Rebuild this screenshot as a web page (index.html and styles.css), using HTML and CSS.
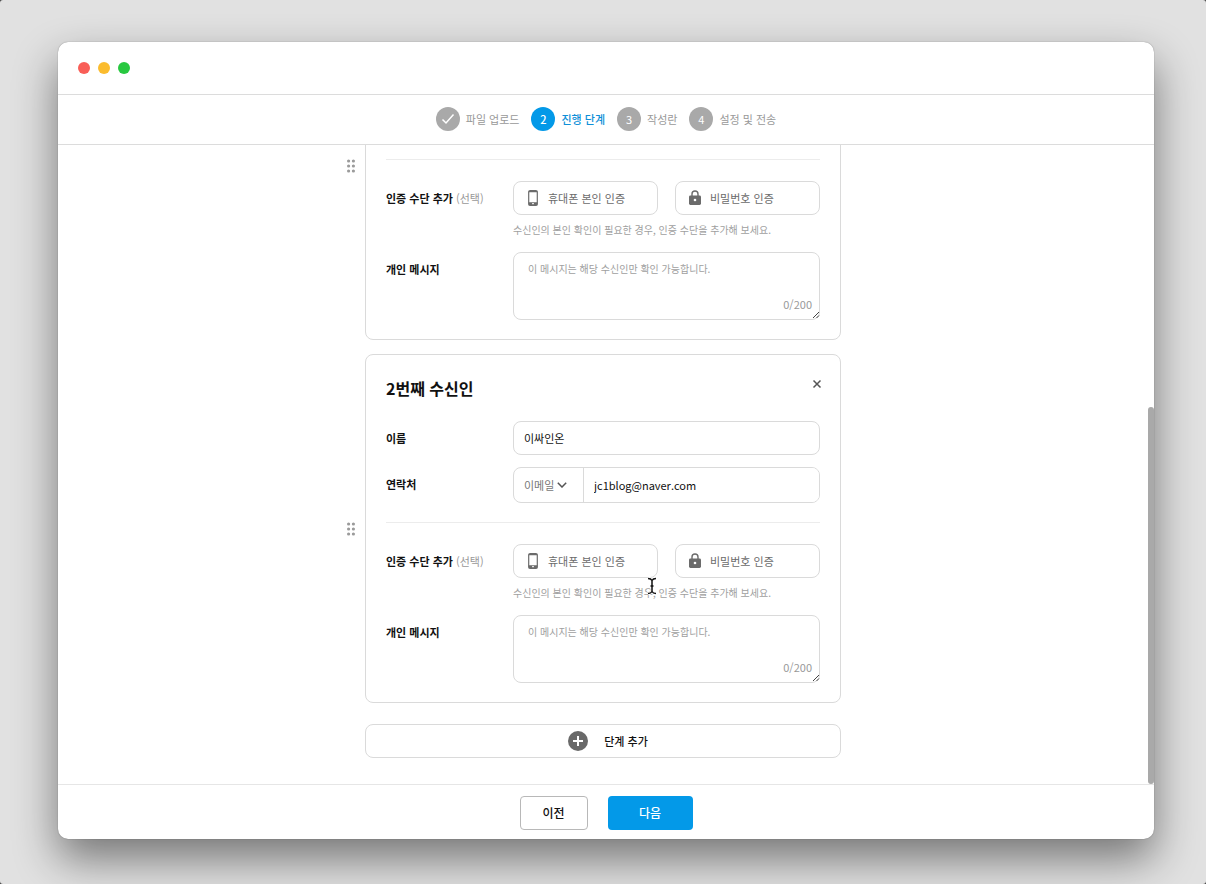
FILE: index.html
```html
<!DOCTYPE html>
<html lang="ko">
<head>
  <meta charset="UTF-8">
  <meta name="viewport" content="width=device-width, initial-scale=1">
  <title>진행 단계</title>
  <link rel="stylesheet" href="styles.css">
</head>
<body>
  <svg class="sprite" aria-hidden="true">
    <symbol id="icon-phone" viewBox="0 0 12 16">
      <rect x="1.7" y="0.7" width="8.6" height="14.6" rx="1.4" fill="none" stroke="#6b6b6b" stroke-width="1.2"/>
      <path d="M1.7 1h8.600v1.200h-8.600zM1.700 12.200h8.600v3h-8.600z" fill="#6b6b6b"/>
      <path d="M5 13.700h2" stroke="#fff" stroke-width="1"/>
    </symbol>
    <symbol id="icon-lock" viewBox="0 0 12 16">
      <path d="M3 6.500V4a3 3 0 0 1 6 0v2.500" fill="none" stroke="#6b6b6b" stroke-width="1.400"/>
      <rect x="0" y="5.500" width="12" height="9.500" rx="1.400" fill="#6b6b6b"/>
      <circle cx="6" cy="10" r="1.300" fill="#fff"/>
    </symbol>
    <symbol id="icon-grip" viewBox="0 0 8 14">
      <g fill="#9b9b9b">
        <circle cx="1.600" cy="2" r="1.600"/><circle cx="6.400" cy="2" r="1.600"/>
        <circle cx="1.600" cy="7" r="1.600"/><circle cx="6.400" cy="7" r="1.600"/>
        <circle cx="1.600" cy="12" r="1.600"/><circle cx="6.400" cy="12" r="1.600"/>
      </g>
    </symbol>
    <symbol id="icon-resize" viewBox="0 0 8 8">
      <path d="M1 7L7 1M4.500 7L7 4.500" stroke="#444" stroke-width="1"/>
    </symbol>
  </svg>

  <div class="window">
    <header class="titlebar">
      <span class="dot red"></span>
      <span class="dot yellow"></span>
      <span class="dot green"></span>
    </header>

    <ol class="steps">
      <li class="step">
        <span class="step-num"><svg width="14" height="12" viewBox="0 0 14 12"><path d="M1.500 6.500L5 10L12.500 1.500" fill="none" stroke="#fff" stroke-width="1.500"/></svg></span>
        파일 업로드
      </li>
      <li class="step active"><span class="step-num">2</span>진행 단계</li>
      <li class="step"><span class="step-num">3</span>작성란</li>
      <li class="step"><span class="step-num">4</span>설정 및 전송</li>
    </ol>

    <div class="body">
      <main class="content">
        <div class="row">
          <svg class="grip" width="8" height="14"><use href="#icon-grip"/></svg>
          <section class="card">
            <hr>
            <div class="field">
              <span class="label">인증 수단 추가 <small>(선택)</small></span>
              <div>
                <div class="auth">
                  <button class="auth-btn"><svg width="12" height="16"><use href="#icon-phone"/></svg>휴대폰 본인 인증</button>
                  <button class="auth-btn"><svg width="12" height="16"><use href="#icon-lock"/></svg>비밀번호 인증</button>
                </div>
                <p class="help">수신인의 본인 확인이 필요한 경우, 인증 수단을 추가해 보세요.</p>
              </div>
            </div>
            <div class="field">
              <label class="label" for="msg1">개인 메시지</label>
              <div class="message">
                <textarea id="msg1" placeholder="이 메시지는 해당 수신인만 확인 가능합니다."></textarea>
                <span class="count">0/200</span>
                <svg class="resize" width="8" height="8"><use href="#icon-resize"/></svg>
              </div>
            </div>
          </section>
        </div>

        <div class="row">
          <svg class="grip" width="8" height="14"><use href="#icon-grip"/></svg>
          <section class="card">
            <div class="card-head">
              <h2>2번째 수신인</h2>
              <button class="close" aria-label="삭제"><svg width="10" height="10" viewBox="0 0 10 10"><path d="M1.500 1.500l7 7M8.500 1.500l-7 7" stroke="#555" stroke-width="1.500"/></svg></button>
            </div>
            <div class="field name">
              <label class="label" for="name">이름</label>
              <input class="input" id="name" type="text" value="이싸인온">
            </div>
            <div class="field">
              <label class="label" for="contact">연락처</label>
              <div class="contact">
                <div class="kind">
                  <select aria-label="연락처 종류"><option>이메일</option></select>
                  <svg width="10" height="6" viewBox="0 0 10 6"><path d="M0.800 0.800L5 5L9.200 0.800" fill="none" stroke="#555" stroke-width="1.500"/></svg>
                </div>
                <input id="contact" type="text" value="jc1blog@naver.com">
              </div>
            </div>
            <hr>
            <div class="field">
              <span class="label">인증 수단 추가 <small>(선택)</small></span>
              <div>
                <div class="auth">
                  <button class="auth-btn"><svg width="12" height="16"><use href="#icon-phone"/></svg>휴대폰 본인 인증</button>
                  <button class="auth-btn"><svg width="12" height="16"><use href="#icon-lock"/></svg>비밀번호 인증</button>
                </div>
                <p class="help">수신인의 본인 확인이 필요한 경우, 인증 수단을 추가해 보세요.</p>
              </div>
            </div>
            <div class="field">
              <label class="label" for="msg2">개인 메시지</label>
              <div class="message">
                <textarea id="msg2" placeholder="이 메시지는 해당 수신인만 확인 가능합니다."></textarea>
                <span class="count">0/200</span>
                <svg class="resize" width="8" height="8"><use href="#icon-resize"/></svg>
              </div>
            </div>
          </section>
        </div>

        <div class="row add-row">
          <button class="add">
            <svg width="20" height="20" viewBox="0 0 20 20"><circle cx="10" cy="10" r="10" fill="#696969"/><path d="M10 5v10M5 10h10" stroke="#fff" stroke-width="2"/></svg>
            단계 추가
          </button>
        </div>
      </main>
      <div class="scrollbar"><div class="thumb"></div></div>
    </div>

    <footer class="footer">
      <button class="btn prev">이전</button>
      <button class="btn next">다음</button>
    </footer>
  </div>

  <svg class="cursor" width="10" height="18" viewBox="0 0 10 18"><path d="M1 1.500Q4 1.500 5 3.500Q6 1.500 9 1.500M5 3v12M1 16.500Q4 16.500 5 14.500Q6 16.500 9 16.500M3.500 9h3" fill="none" stroke="#fff" stroke-width="3"/><path d="M1 1.500Q4 1.500 5 3.500Q6 1.500 9 1.500M5 3v12M1 16.500Q4 16.500 5 14.500Q6 16.500 9 16.500M3.500 9h3" fill="none" stroke="#111" stroke-width="1.500"/></svg>
</body>
</html>
```
FILE: styles.css
```css
* { box-sizing: border-box; }
html { background: #444; }
body {
  margin: 0;
  height: 100vh;
  padding: 42px 52px 45px 58px;
  background: #e1e1e1;
  border-radius: 3px;
  overflow: hidden;
  color: #111;
  font-family: "Noto Sans CJK KR", sans-serif;
  font-size: 11px;
  line-height: 16px;
}
button, input, select, textarea { font: inherit; color: inherit; margin: 0; }
button { background: #fff; cursor: pointer; padding: 0; }
svg { flex: none; }
.sprite { position: absolute; width: 0; height: 0; }

.window {
  display: flex;
  flex-direction: column;
  height: 100%;
  background: #fff;
  border-radius: 10px;
  overflow: hidden;
  box-shadow: 0 0 1px rgba(0, 0, 0, 0.5), 0 20px 44px rgba(0, 0, 0, 0.48);
}
.titlebar {
  display: flex;
  align-items: center;
  gap: 8px;
  height: 53px;
  padding-left: 20px;
  border-bottom: 1px solid #dcdcdc;
}
.dot { width: 12px; height: 12px; border-radius: 50%; }
.red { background: #f95e57; }
.yellow { background: #fbbc2e; }
.green { background: #28c840; }

.steps {
  display: flex;
  align-items: center;
  justify-content: center;
  gap: 12px;
  height: 50px;
  margin: 0;
  padding: 0 0 1px;
  list-style: none;
  border-bottom: 1px solid #dcdcdc;
  color: #999;
}
.step { display: flex; align-items: center; gap: 6px; }
.step-num {
  display: flex;
  align-items: center;
  justify-content: center;
  width: 24px;
  height: 24px;
  border-radius: 50%;
  background: #a9a9a9;
  color: #fff;
}
.active { color: #0e8fd8; font-weight: 500; }
.active .step-num { background: #0399e8; }

.body { flex: 1; display: flex; min-height: 0; }
.content {
  flex: 1;
  display: flex;
  flex-direction: column;
  justify-content: flex-end;
  gap: 14px;
  padding-bottom: 26px;
  overflow: hidden;
}
.row {
  display: grid;
  grid-template-columns: 1fr minmax(0, 476px) 1fr;
  column-gap: 10px;
  align-items: center;
}
.grip { justify-self: end; }
.card {
  display: flex;
  flex-direction: column;
  justify-content: flex-end;
  min-height: 349px;
  padding: 20px 20px 19px;
  border: 1px solid #dadada;
  border-radius: 8px;
}
.card-head { display: flex; justify-content: space-between; margin-bottom: 20px; }
h2 { margin: 0; font-size: 16px; line-height: 26px; font-weight: 700; }
.close { width: 10px; height: 18px; margin-right: -2px; border: 0; }
.close svg { display: block; margin: auto; }
hr { width: 100%; height: 1px; margin: 19px 0 21px; border: 0; background: #ececec; }

.field {
  display: grid;
  grid-template-columns: 127px 1fr;
  align-items: start;
}
.label { padding-top: 9px; font-weight: 700; }
.label small { font-size: 11px; font-weight: 400; color: #999; }
.name { margin-bottom: 12px; }
.input {
  width: 100%;
  height: 34px;
  padding: 0 10px;
  border: 1px solid #dadada;
  border-radius: 8px;
}
.contact {
  display: flex;
  height: 36px;
  border: 1px solid #dadada;
  border-radius: 8px;
  overflow: hidden;
}
.contact input { flex: 1; min-width: 0; padding: 0 10px; border: 0; }
.kind {
  display: flex;
  align-items: center;
  width: 70px;
  padding-left: 10px;
  border-right: 1px solid #dadada;
  color: #777;
}
.kind select { width: 33px; padding: 0; border: 0; appearance: none; background: none; }

.auth { display: grid; grid-template-columns: 1fr 1fr; gap: 17px; }
.auth-btn {
  display: flex;
  align-items: center;
  gap: 9px;
  height: 34px;
  padding-left: 13px;
  border: 1px solid #dadada;
  border-radius: 8px;
  color: #6b6b6b;
}
.help { margin: 7px 0 14px; font-size: 10px; color: #a0a0a0; }
.message { position: relative; }
textarea {
  display: block;
  width: 100%;
  height: 68px;
  padding: 8px 14px;
  border: 1px solid #dadada;
  border-radius: 8px;
  resize: none;
}
textarea::placeholder { font-size: 10px; color: #a0a0a0; }
.count { position: absolute; right: 8px; bottom: 8px; color: #999; }
.resize { position: absolute; right: 0; bottom: 1px; }

.add-row { margin-top: 7px; }
.add {
  grid-column: 2;
  display: flex;
  align-items: center;
  justify-content: center;
  gap: 16px;
  height: 34px;
  padding-left: 10px;
  border: 1px solid #dadada;
  border-radius: 8px;
  font-weight: 500;
}
.scrollbar { display: flex; align-items: flex-end; width: 6px; }
.thumb { width: 100%; height: 59%; border-radius: 3px; background: #a9a9a9; }

.footer {
  display: flex;
  justify-content: center;
  gap: 20px;
  padding: 11px 0 9px;
  border-top: 1px solid #e6e6e6;
}
.btn { height: 34px; border-radius: 4px; font-size: 12px; font-weight: 500; }
.prev { width: 68px; border: 1px solid #b8b8b8; }
.next { width: 85px; border: 0; background: #0399e8; color: #fff; }

.cursor { position: absolute; left: 647px; top: 577px; }
```
